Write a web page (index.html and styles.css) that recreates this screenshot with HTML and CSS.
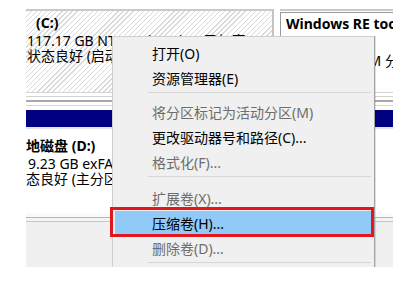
FILE: index.html
```html
<!DOCTYPE html>
<html lang="zh-CN">
<head>
<meta charset="utf-8">
<title>磁盘管理 - 压缩卷</title>
<link rel="stylesheet" href="styles.css">
</head>
<body>
<div class="frame">
  <div class="disk0">
    <div class="part part-c">
      <div class="title title-c">(C:)</div>
      <div class="line">117.17 GB NTFS (BitLocker 已加密)</div>
      <div class="line">状态良好 (启动, 页面文件, 故障转储, 基本数据分区)</div>
    </div>
    <div class="part part-re">
      <div class="re-box">
        <div class="title">Windows RE tools</div>
        <div class="line">1.00 GB NTFS</div>
        <div class="line">状态良好 (OEM 分区)</div>
      </div>
    </div>
  </div>
  <div class="disk-sep"></div>
  <div class="navy"></div>
  <div class="part-d">
    <div class="title">本地磁盘 (D:)</div>
    <div class="line">119.23 GB exFAT</div>
    <div class="line">状态良好 (主分区)</div>
  </div>
  <div class="bottom-lines"></div>
  <div class="gray-area"></div>

  <div class="menu">
    <div class="item">打开(O)</div>
    <div class="item">资源管理器(E)</div>
    <div class="sep sep-1"></div>
    <div class="item disabled">将分区标记为活动分区(M)</div>
    <div class="item">更改驱动器号和路径(C)...</div>
    <div class="item disabled">格式化(F)...</div>
    <div class="sep sep-2"></div>
    <div class="item disabled">扩展卷(X)...</div>
    <div class="item active">压缩卷(H)...</div>
    <div class="item disabled">删除卷(D)...</div>
    <div class="sep sep-3"></div>
    <div class="item">属性(P)</div>
  </div>
  <div class="callout"></div>
</div>
</body>
</html>
```

FILE: styles.css
```css
* { box-sizing: border-box; }

html, body {
  margin: 0;
  background: #ffffff;
}

body {
  padding: 9px 0 0 26px;
  font-family: "Noto Sans", "Noto Sans CJK SC", sans-serif;
  font-size: 14px;
  color: #000;
}

.frame {
  position: relative;
  width: 367px;
  height: 258px;
  overflow: hidden;
  background: #ffffff;
  display: flex;
  flex-direction: column;
}

.title {
  font-weight: bold;
  line-height: 20px;
  white-space: nowrap;
}

.line {
  line-height: 15px;
  white-space: nowrap;
}

.disk0 {
  display: flex;
  height: 84px;
  flex: none;
  border-bottom: 1px solid #d4d4d4;
}

.part {
  overflow: hidden;
}

.part-c {
  width: 248px;
  border-top: 2px solid #c9c9c9;
  border-right: 2px solid #c4c4c4;
  padding: 2px 0 0 1px;
  background-color: #ffffff;
  background-image: repeating-linear-gradient(135deg, #d9d9d9 0 1px, transparent 1px 3.6px);
}

.title-c {
  padding-left: 9px;
}

.part-re {
  flex: 1;
  margin-left: 6px;
  border-top: 2px solid #c9c9c9;
  padding-top: 1px;
}

.re-box {
  height: 100%;
  border-left: 1px solid #9a9a9a;
  border-top: 1px solid #9a9a9a;
  padding: 1px 0 0 5px;
  overflow: hidden;
}

.re-box .line:last-child {
  margin-top: 4px;
}

.disk-sep {
  flex: none;
  height: 17px;
  background: linear-gradient(to bottom,
    #ffffff 0 3px,
    #d2d2d2 3px 4px,
    #ffffff 4px 7px,
    #a9a9a9 7px 9px,
    #ffffff 9px 12px,
    #d6d6d6 12px 13px,
    #ffffff 13px);
}

.navy {
  flex: none;
  height: 17px;
  background: #000080;
}

.part-d {
  flex: none;
  height: 86px;
  margin-left: -14px;
  padding-top: 7px;
  border-top: 2px solid #e4e4e4;
}

.bottom-lines {
  flex: none;
  height: 9px;
  background: linear-gradient(to bottom,
    #fafafa 0 4px,
    #b5b5b5 4px 5px,
    #f4f4f4 5px 8px,
    #c6c6c6 8px 9px);
}

.gray-area {
  flex: 1;
  background: #f0f0f0;
}

.menu {
  position: absolute;
  left: 86px;
  top: 27px;
  width: 263px;
  height: 260px;
  background: #f0f0f0;
  border: 1px solid #cfcfcf;
  border-right-color: #a3a3a3;
  box-shadow: 1px 0 0 rgba(0, 0, 0, 0.12);
  padding: 4px 3px 0 2px;
}

.item {
  height: 25px;
  line-height: 25px;
  padding-left: 37px;
  white-space: nowrap;
  color: #000;
}

.item.disabled {
  color: #6d6d6d;
}

.item.active {
  background: #91c9f7;
}

.sep {
  height: 1px;
  background: #d7d7d7;
  margin-left: 33px;
  margin-right: 0;
}

.sep-1 { margin-top: 1px; margin-bottom: 7px; }
.sep-2 { margin-top: 1px; margin-bottom: 9px; }
.sep-3 { margin-top: 1px; margin-bottom: 7px; }

.callout {
  position: absolute;
  left: 84px;
  top: 198px;
  width: 264px;
  height: 30px;
  border: 3px solid #e3161e;
}
```
